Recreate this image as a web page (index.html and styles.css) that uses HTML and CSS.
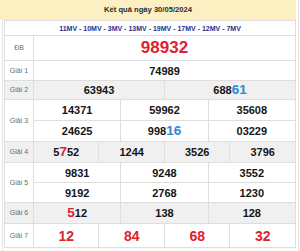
FILE: index.html
```html
<!DOCTYPE html>
<html lang="vi">
<head>
<meta charset="utf-8">
<link rel="stylesheet" href="styles.css">
</head>
<body>
<div class="frame">
  <div class="head">Kết quả ngày 30/05/2024</div>
  <div class="body">
    <table class="kq">
      <colgroup>
        <col class="c-label">
        <col><col><col><col><col><col><col><col><col><col><col><col>
      </colgroup>
      <tr class="r-mv"><td colspan="13" class="mv">11MV - 10MV - 3MV - 13MV - 19MV - 17MV - 12MV - 7MV</td></tr>
      <tr class="r-db"><td class="lbl">ĐB</td><td colspan="12" class="n db">98932</td></tr>
      <tr class="r-20"><td class="lbl">Giải 1</td><td colspan="12" class="n">74989</td></tr>
      <tr class="r-19 alt"><td class="lbl">Giải 2</td><td colspan="6" class="n">63943</td><td colspan="6" class="n">688<span class="hb">61</span></td></tr>
      <tr class="r-21"><td class="lbl" rowspan="2">Giải 3</td><td colspan="4" class="n">14371</td><td colspan="4" class="n">59962</td><td colspan="4" class="n">35608</td></tr>
      <tr class="r-21"><td colspan="4" class="n">24625</td><td colspan="4" class="n">998<span class="hb">16</span></td><td colspan="4" class="n">03229</td></tr>
      <tr class="r-21 alt"><td class="lbl">Giải 4</td><td colspan="3" class="n">5<span class="hr">7</span>52</td><td colspan="3" class="n">1244</td><td colspan="3" class="n">3526</td><td colspan="3" class="n">3796</td></tr>
      <tr class="r-20"><td class="lbl" rowspan="2">Giải 5</td><td colspan="4" class="n">9831</td><td colspan="4" class="n">9248</td><td colspan="4" class="n">3552</td></tr>
      <tr class="r-20"><td colspan="4" class="n">9192</td><td colspan="4" class="n">2768</td><td colspan="4" class="n">1230</td></tr>
      <tr class="r-21 alt"><td class="lbl">Giải 6</td><td colspan="4" class="n"><span class="hr">5</span>12</td><td colspan="4" class="n">138</td><td colspan="4" class="n">128</td></tr>
      <tr class="r-24"><td class="lbl">Giải 7</td><td colspan="3" class="n g7">12</td><td colspan="3" class="n g7">84</td><td colspan="3" class="n g7">68</td><td colspan="3" class="n g7">32</td></tr>
    </table>
  </div>
</div>
</body>
</html>
```
FILE: styles.css
```css
html, body {
  margin: 0;
  padding: 0;
  background: #ffffff;
}

body {
  font-family: "Liberation Sans", Arial, sans-serif;
}

.frame {
  width: 299px;
  height: 251px;
  box-sizing: border-box;
  border-right: 1px solid #e2e2e2;
  overflow: hidden;
}

.head {
  width: 296px;
  height: 20px;
  background: #fcf0c3;
  color: #2a2a2a;
  font-size: 7.6px;
  font-weight: bold;
  line-height: 20px;
  text-align: center;
}

.body {
  margin-left: 2px;
  border-left: 1px solid #e4e4e4;
  padding-left: 1px;
  height: 231px;
}

.kq {
  width: 292px;
  border-collapse: collapse;
  table-layout: fixed;
}

.c-label {
  width: 29px;
}

.kq td {
  border: 1px solid #dedede;
  padding: 0;
  text-align: center;
  vertical-align: middle;
  white-space: nowrap;
  overflow: hidden;
}

.r-mv { height: 15px; }
.r-db { height: 25px; }
.r-19 { height: 19px; }
.r-20 { height: 20px; }
.r-21 { height: 21px; }
.r-24 { height: 24px; }

.alt td {
  background: #f0f0f0;
}

.mv {
  color: #25318c;
  font-size: 7px;
  font-weight: bold;
  line-height: 13px;
}

.lbl {
  color: #6a6a6a;
  font-size: 7px;
  line-height: 10px;
}

.n {
  color: #151515;
  font-size: 11px;
  font-weight: bold;
  line-height: 14px;
}

.db {
  color: #e0222e;
  font-size: 17px;
  line-height: 20px;
}

.g7 {
  color: #e0222e;
  font-size: 14px;
  line-height: 18px;
}

.hb {
  color: #2f86d6;
  font-size: 13.5px;
}

.hr {
  color: #e0222e;
  font-size: 13.5px;
}
```
